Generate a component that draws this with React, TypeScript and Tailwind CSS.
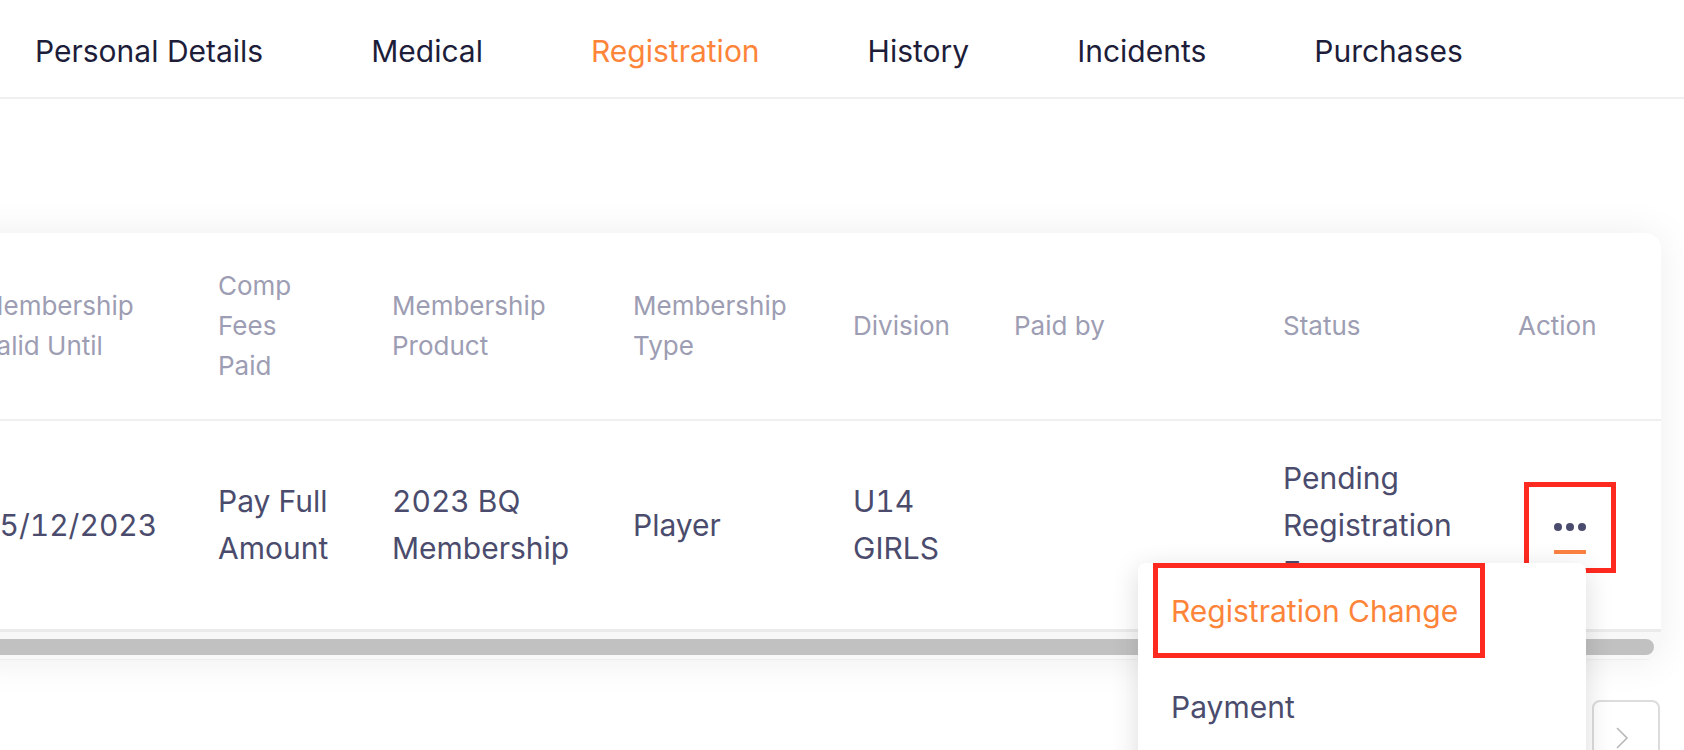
const tabs = [
  { label: "Personal Details", active: false },
  { label: "Medical", active: false },
  { label: "Registration", active: true },
  { label: "History", active: false },
  { label: "Incidents", active: false },
  { label: "Purchases", active: false },
];

const columns = [
  { w: "w-[238px]", head: ["Membership", "Valid Until"], body: ["15/12/2023"] },
  { w: "w-[174px]", head: ["Comp", "Fees", "Paid"], body: ["Pay Full", "Amount"] },
  { w: "w-[241px]", head: ["Membership", "Product"], body: ["2023 BQ", "Membership"] },
  { w: "w-[220px]", head: ["Membership", "Type"], body: ["Player"] },
  { w: "w-[161px]", head: ["Division"], body: ["U14", "GIRLS"] },
  { w: "w-[269px]", head: ["Paid by"], body: [] },
  { w: "w-[235px]", head: ["Status"], body: ["Pending", "Registration", "Fee"] },
];

const ActionButton = () => (
  <div className="ml-[6px] mt-[5px] w-[92px] h-[91px] border-[5px] border-[#ff2a1f] flex flex-col items-center pt-[36px]">
    <div className="flex gap-[4px]">
      <span className="w-[8px] h-[8px] rounded-full bg-[#4b4c6d]" />
      <span className="w-[8px] h-[8px] rounded-full bg-[#4b4c6d]" />
      <span className="w-[8px] h-[8px] rounded-full bg-[#4b4c6d]" />
    </div>
    <span className="mt-[19px] w-[32px] h-[4px] bg-[#fb8241]" />
  </div>
);

export default function App() {
  return (
    <div className="relative w-full h-[750px] overflow-hidden bg-white font-['Inter',sans-serif]">
      {/* tabs */}
      <div className="h-[99px] border-b-2 border-[#efefef] flex items-center pt-[6px] pl-[35px] gap-[108px] text-[30px]">
        {tabs.map((t) => (
          <span
            key={t.label}
            className={t.active ? "text-[#fd8439]" : "text-[#1d1d3a]"}
          >
            {t.label}
          </span>
        ))}
      </div>

      {/* table card */}
      <div className="-ml-[40px] mt-[134px] w-[1701px] rounded-[16px] bg-white shadow-[0_0_40px_rgba(0,0,0,0.07)] overflow-hidden">
        <div className="flex h-[188px] pl-[20px] border-b-2 border-[#efefef] text-[26px] leading-[40px] text-[#9d9db3]">
          {columns.map((c) => (
            <div key={c.head.join()} className={`${c.w} shrink-0 flex flex-col justify-center`}>
              {c.head.map((l) => (
                <span key={l} className="whitespace-nowrap">{l}</span>
              ))}
            </div>
          ))}
          <div className="w-[143px] shrink-0 flex flex-col justify-center">Action</div>
        </div>

        <div className="flex h-[211px] pl-[20px] border-b-[3px] border-[#ebebeb] text-[30px] leading-[47px] text-[#4b4c6d] tabular-nums">
          {columns.map((c) => (
            <div key={c.head.join()} className={`${c.w} shrink-0 flex flex-col justify-center`}>
              {c.body.map((l) => (
                <span key={l} className="whitespace-nowrap">{l}</span>
              ))}
            </div>
          ))}
          <div className="w-[143px] shrink-0 flex items-center">
            <ActionButton />
          </div>
        </div>

        {/* horizontal scrollbar */}
        <div className="h-[28px] bg-[#f8f8f8] pt-[7px] border-b border-[#eeeeee]">
          <div className="w-[1694px] h-[16px] rounded-full bg-[#c1c1c1]" />
        </div>
      </div>

      {/* pagination */}
      <div className="flex justify-end pr-[24px] mt-[40px]">
        <div className="w-[68px] h-[76px] rounded-lg border-2 border-[#dcdcdc] flex items-center justify-center pr-[8px]">
          <svg width="14" height="24" viewBox="0 0 14 24" fill="none">
            <polyline points="2,2 12,12 2,22" stroke="#b8b8b8" strokeWidth="1.6" />
          </svg>
        </div>
      </div>

      {/* action dropdown */}
      <div className="absolute left-[1138px] top-[563px] w-[448px] h-[240px] rounded-lg bg-white shadow-[0_6px_28px_rgba(0,0,0,0.14)] text-[30px]">
        <div className="relative h-[96px] px-[33px] flex items-center text-[#fd8439]">
          Registration Change
          <div className="absolute left-[15px] top-0 w-[332px] h-[95px] border-[5px] border-[#ff2a1f]" />
        </div>
        <div className="h-[96px] px-[33px] flex items-center text-[#4b4c6d]">Payment</div>
      </div>
    </div>
  );
}
